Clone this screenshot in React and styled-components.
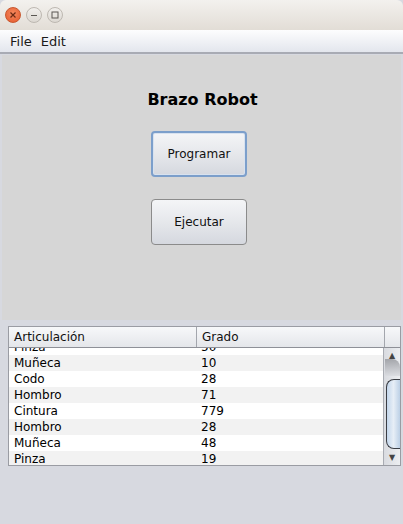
import React from 'react';
import styled, { createGlobalStyle } from 'styled-components';

const GlobalStyle = createGlobalStyle`
  html, body {
    margin: 0;
    padding: 0;
    background: #d7d9e0;
    font-family: 'DejaVu Sans', 'Liberation Sans', sans-serif;
  }
`;

const Window = styled.div`
  width: 403px;
  height: 524px;
  display: flex;
  flex-direction: column;
  background: #d7d9e0;
  overflow: hidden;
`;

const TitleBar = styled.div`
  height: 30px;
  display: flex;
  align-items: center;
  gap: 4px;
  padding-left: 5px;
  background: linear-gradient(#f3f1ee, #e2ddd6);
  border-radius: 6px 6px 0 0;
  box-sizing: border-box;
`;

const WinButton = styled.div`
  width: 16px;
  height: 16px;
  border-radius: 50%;
  box-sizing: border-box;
  display: flex;
  align-items: center;
  justify-content: center;
  background: ${p => (p.$close ? 'radial-gradient(circle at 50% 40%, #f58a5f, #e4572a)' : 'linear-gradient(#f1efec, #dcd8d2)')};
  border: 1px solid ${p => (p.$close ? '#c9572e' : '#bdb8b1')};
  margin-right: 1px;
`;

const MenuBar = styled.div`
  height: 22px;
  display: flex;
  align-items: center;
  gap: 9px;
  padding-left: 10px;
  background: linear-gradient(#fdfdfe, #e3e6ed);
  border-bottom: 2px solid #a8abb4;
  font-size: 13px;
  color: #1a1a1a;
`;

const MainPanel = styled.div`
  margin: 1px 2px 0 2px;
  height: 265px;
  background: #d6d6d6;
  display: flex;
  flex-direction: column;
  align-items: center;
`;

const Heading = styled.div`
  font-weight: bold;
  font-size: 16px;
  color: #000;
  margin-top: 35px;
  margin-left: 2px;
`;

const ActionButton = styled.button`
  width: 96px;
  height: 46px;
  margin-top: ${p => p.$top}px;
  margin-right: 5px;
  border-radius: 4px;
  font-family: 'DejaVu Sans', sans-serif;
  font-size: 12px;
  color: #111;
  background: linear-gradient(#f4f5f7, #e4e6ea 55%, #d5d8df);
  border: ${p => (p.$focused ? '2px solid #7c9fcb' : '1px solid #8b8b8b')};
  box-shadow: ${p => (p.$focused ? 'inset 0 0 0 1px #d8e2ef' : 'none')};
  padding: 0;
`;

const TableArea = styled.div`
  margin: 6px 2px 0 8px;
  height: 140px;
  border: 1px solid #9a9ca3;
  background: #fff;
  display: flex;
  flex-direction: column;
  box-sizing: border-box;
`;

const HeaderRow = styled.div`
  height: 20px;
  display: flex;
  background: linear-gradient(#f7f8fa, #e4e6ea);
  border-bottom: 1px solid #8e9097;
  font-size: 12px;
  color: #111;
  flex-shrink: 0;
`;

const HeaderCell = styled.div`
  width: ${p => p.$w}px;
  flex-shrink: 0;
  box-sizing: border-box;
  padding-left: 5px;
  display: flex;
  align-items: center;
  border-right: 1px solid #a3a6ad;
`;

const BodyWrap = styled.div`
  flex: 1;
  display: flex;
  overflow: hidden;
`;

const Rows = styled.div`
  flex: 1;
  overflow: hidden;
`;

const RowList = styled.div`
  transform: translateY(-9px);
`;

const Row = styled.div`
  height: 16px;
  display: flex;
  align-items: center;
  font-size: 12px;
  color: #000;
  background: ${p => (p.$alt ? '#f2f2f2' : '#ffffff')};
`;

const Cell = styled.div`
  width: ${p => p.$w}px;
  padding-left: 5px;
  box-sizing: border-box;
`;

const ScrollBar = styled.div`
  width: 16px;
  border-left: 1px solid #a9acb3;
  background: linear-gradient(90deg, #d9dbe0, #eceef1);
  display: flex;
  flex-direction: column;
  align-items: center;
`;

const Arrow = styled.div`
  height: 15px;
  display: flex;
  align-items: center;
  justify-content: center;
  font-size: 8px;
  color: #444;
`;

const Shade = styled.div`
  width: 15px;
  height: 17px;
  margin-top: -4px;
  border-radius: 0 8px 0 0;
  background: linear-gradient(#94969b, #d9dbe0);
  opacity: 0.8;
`;

const Thumb = styled.div`
  width: 14px;
  height: 70px;
  margin-top: 3px;
  margin-left: 1px;
  box-sizing: border-box;
  border: 1px solid #3a3d44;
  border-right-width: 0;
  border-radius: 8px 0 0 8px;
  background: linear-gradient(90deg, #c4d7ec, #e7eef6 50%, #bcd0e6);
`;

const Spacer = styled.div`
  flex: 1;
`;

const data = [
  ['Pinza', '50'],
  ['Muñeca', '10'],
  ['Codo', '28'],
  ['Hombro', '71'],
  ['Cintura', '779'],
  ['Hombro', '28'],
  ['Muñeca', '48'],
  ['Pinza', '19'],
];

export default function App() {
  return (
    <Window>
      <GlobalStyle />
      <TitleBar>
        <WinButton $close>
          <svg width="8" height="8" viewBox="0 0 8 8">
            <path d="M1.5 1.5L6.5 6.5M6.5 1.5L1.5 6.5" stroke="#6b2a14" strokeWidth="1.2" />
          </svg>
        </WinButton>
        <WinButton>
          <svg width="8" height="8" viewBox="0 0 8 8">
            <path d="M1 4.5H7" stroke="#5a5753" strokeWidth="1" />
          </svg>
        </WinButton>
        <WinButton>
          <svg width="8" height="8" viewBox="0 0 8 8">
            <rect x="1" y="1" width="6" height="6" fill="none" stroke="#5a5753" strokeWidth="1" />
          </svg>
        </WinButton>
      </TitleBar>
      <MenuBar>
        <span>File</span>
        <span>Edit</span>
      </MenuBar>
      <MainPanel>
        <Heading>Brazo Robot</Heading>
        <ActionButton $top={22} $focused>Programar</ActionButton>
        <ActionButton $top={22}>Ejecutar</ActionButton>
      </MainPanel>
      <TableArea>
        <HeaderRow>
          <HeaderCell $w={188}>Articulación</HeaderCell>
          <HeaderCell $w={188}>Grado</HeaderCell>
        </HeaderRow>
        <BodyWrap>
          <Rows>
            <RowList>
              {data.map((r, i) => (
                <Row key={i} $alt={i % 2 === 1}>
                  <Cell $w={188}>{r[0]}</Cell>
                  <Cell $w={188}>{r[1]}</Cell>
                </Row>
              ))}
            </RowList>
          </Rows>
          <ScrollBar>
            <Arrow>▲</Arrow>
            <Shade />
            <Thumb />
            <Spacer />
            <Arrow>▼</Arrow>
          </ScrollBar>
        </BodyWrap>
      </TableArea>
    </Window>
  );
}
